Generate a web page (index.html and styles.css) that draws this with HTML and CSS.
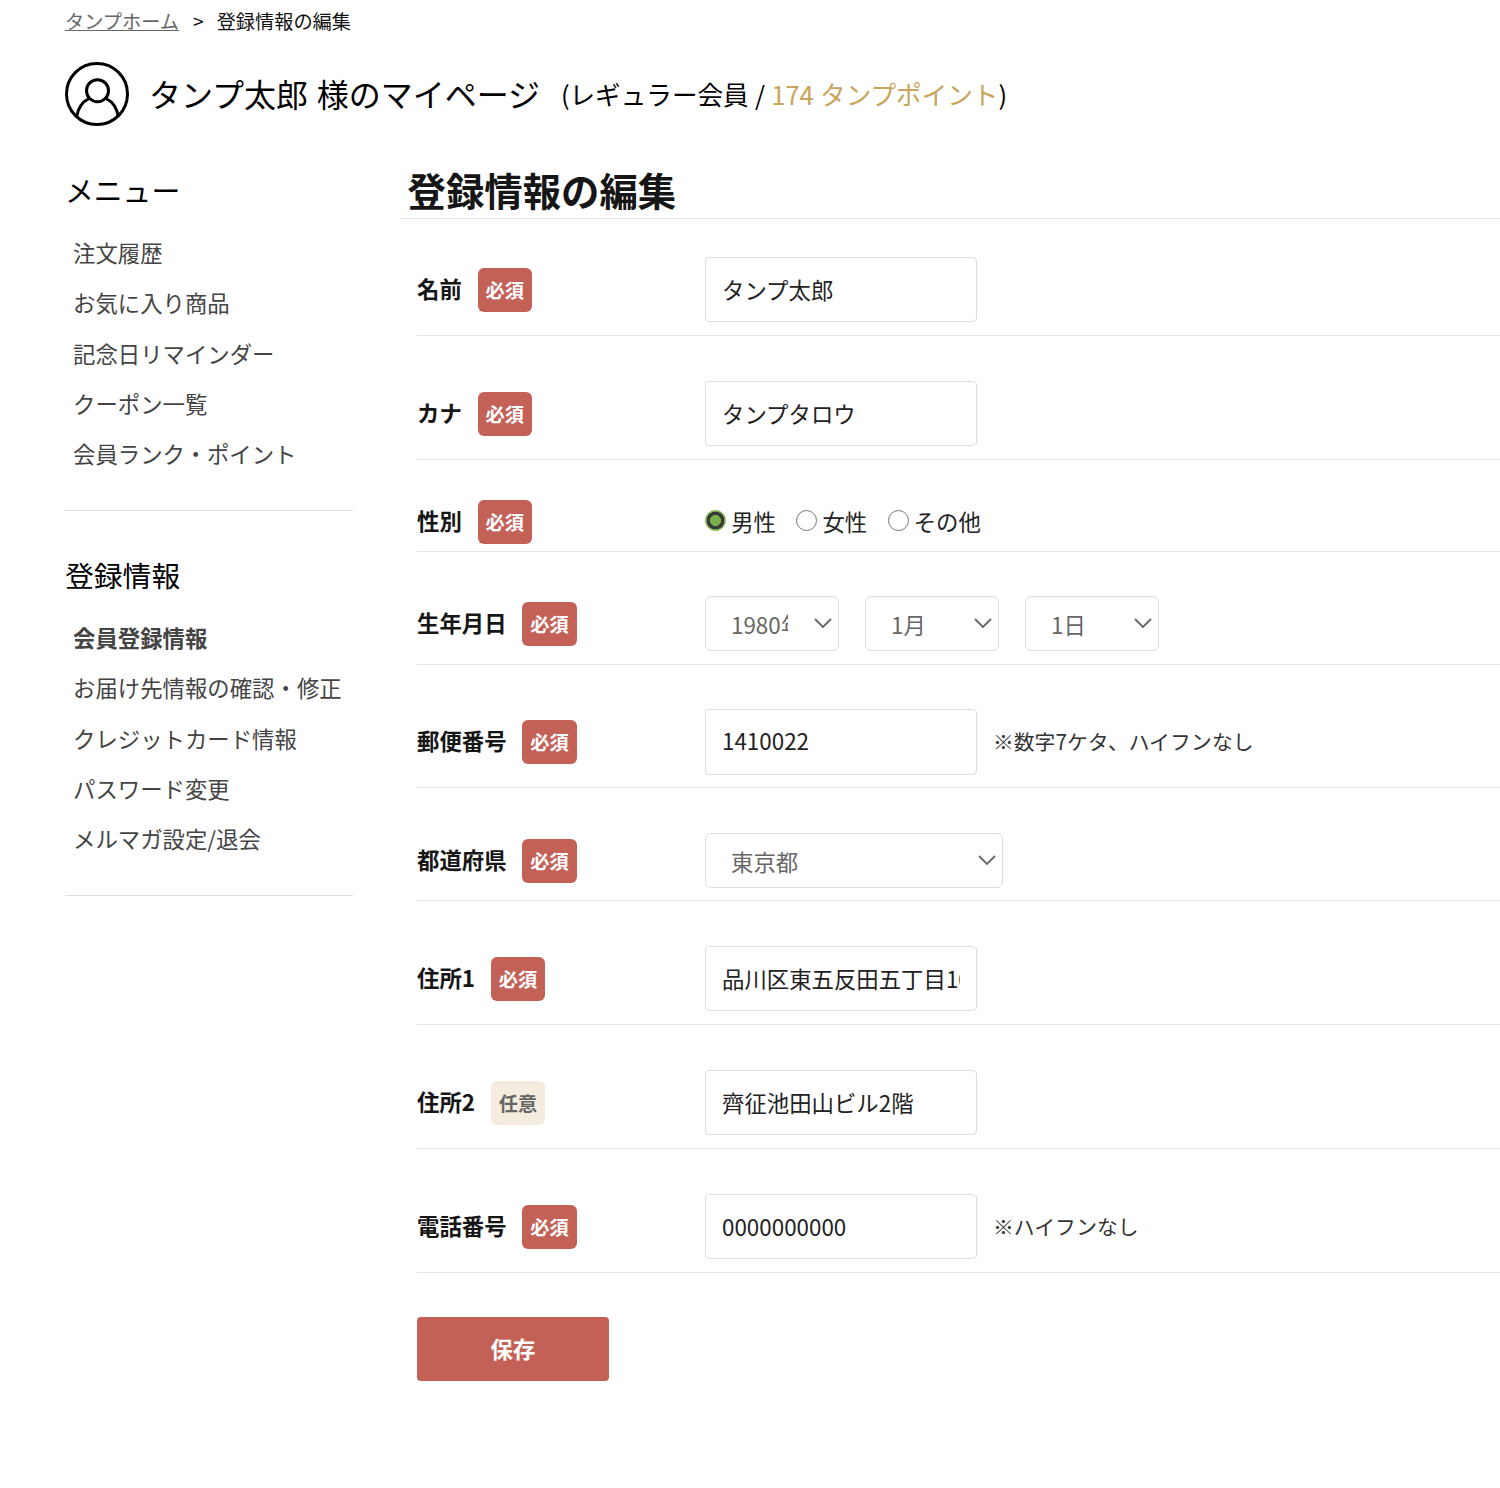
FILE: index.html
```html
<!DOCTYPE html>
<html lang="ja">
<head>
<meta charset="utf-8">
<title>登録情報の編集</title>
<link rel="stylesheet" href="styles.css">
</head>
<body>
<nav class="crumbs"><a href="#">タンプホーム</a><span class="sep">&gt;</span><span>登録情報の編集</span></nav>
<header class="user">
  <svg class="avatar" viewBox="0 0 64 64" fill="none" stroke="#000" stroke-width="3">
    <circle cx="32" cy="32" r="30.5"/>
    <circle cx="32.500" cy="28.700" r="11"/>
    <path d="M11.700 54.700C13 46 18 39.500 24 36.500M41 36.500C47 39.500 52 46 53.300 54.700"/>
  </svg>
  <span class="user-name">タンプ太郎 様のマイページ</span>
  <span class="user-rank">(レギュラー会員 / <em>174 タンプポイント</em>)</span>
</header>
<div class="page">
  <aside class="side">
    <section class="side-group">
      <h2>メニュー</h2>
      <ul>
        <li><a href="#">注文履歴</a></li>
        <li><a href="#">お気に入り商品</a></li>
        <li><a href="#">記念日リマインダー</a></li>
        <li><a href="#">クーポン一覧</a></li>
        <li><a href="#">会員ランク・ポイント</a></li>
      </ul>
    </section>
    <section class="side-group">
      <h2>登録情報</h2>
      <ul>
        <li><a href="#" class="current">会員登録情報</a></li>
        <li><a href="#">お届け先情報の確認・修正</a></li>
        <li><a href="#">クレジットカード情報</a></li>
        <li><a href="#">パスワード変更</a></li>
        <li><a href="#">メルマガ設定/退会</a></li>
      </ul>
    </section>
  </aside>
  <main class="main">
    <h1>登録情報の編集</h1>
    <form class="form">
      <div class="row row-first">
        <div class="label"><b>名前</b><span class="badge">必須</span></div>
        <input class="text" type="text" value="タンプ太郎">
      </div>
      <div class="row">
        <div class="label"><b>カナ</b><span class="badge">必須</span></div>
        <input class="text" type="text" value="タンプタロウ">
      </div>
      <div class="row row-radio">
        <div class="label"><b>性別</b><span class="badge">必須</span></div>
        <div class="radios">
          <label><input type="radio" name="sex" checked>男性</label>
          <label><input type="radio" name="sex">女性</label>
          <label><input type="radio" name="sex">その他</label>
        </div>
      </div>
      <div class="row row-date">
        <div class="label"><b>生年月日</b><span class="badge">必須</span></div>
        <div class="selects">
          <div class="select select-s"><select><option>1980年</option></select><svg viewBox="0 0 18 10"><path d="M1 1l8 8 8-8"/></svg></div>
          <div class="select select-s"><select><option>1月</option></select><svg viewBox="0 0 18 10"><path d="M1 1l8 8 8-8"/></svg></div>
          <div class="select select-s"><select><option>1日</option></select><svg viewBox="0 0 18 10"><path d="M1 1l8 8 8-8"/></svg></div>
        </div>
      </div>
      <div class="row row-zip">
        <div class="label"><b>郵便番号</b><span class="badge">必須</span></div>
        <input class="text" type="text" value="1410022">
        <span class="note">※数字7ケタ、ハイフンなし</span>
      </div>
      <div class="row row-pref">
        <div class="label"><b>都道府県</b><span class="badge">必須</span></div>
        <div class="select select-l"><select><option>東京都</option></select><svg viewBox="0 0 18 10"><path d="M1 1l8 8 8-8"/></svg></div>
      </div>
      <div class="row">
        <div class="label"><b>住所1</b><span class="badge">必須</span></div>
        <input class="text" type="text" value="品川区東五反田五丁目10番地">
      </div>
      <div class="row">
        <div class="label"><b>住所2</b><span class="badge badge-opt">任意</span></div>
        <input class="text" type="text" value="齊征池田山ビル2階">
      </div>
      <div class="row">
        <div class="label"><b>電話番号</b><span class="badge">必須</span></div>
        <input class="text" type="text" value="0000000000">
        <span class="note">※ハイフンなし</span>
      </div>
      <button class="save" type="button">保存</button>
    </form>
  </main>
</div>
</body>
</html>
```

FILE: styles.css
```css
* { box-sizing: border-box; }
html, body { margin: 0; padding: 0; }
body {
  background: #fff;
  color: #000;
  font-family: "Noto Sans CJK JP", "Noto Sans", sans-serif;
  height: 1488px;
  overflow: hidden;
}
a { color: inherit; }
.crumbs {
  display: flex;
  height: 42px;
  align-items: center;
  padding-left: 65px;
  font-size: 19.2px;
  color: #111;
}
.crumbs a { color: #666; }
.sep { margin: 0 13px 0 14px; }
.user {
  display: flex;
  align-items: center;
  height: 64px;
  margin-top: 20px;
  padding-left: 65px;
}
.avatar { width: 64px; height: 64px; flex: none; }
.user-name { margin-left: 20px; padding-bottom: 2px; font-size: 32px; word-spacing: 1.500px; }
.user-rank { margin-left: 20.800px; padding-bottom: 2px; font-size: 25.6px; word-spacing: 0.500px; }
.user-rank em { font-style: normal; color: #c9a45a; }
.page {
  display: flex;
  padding-left: 65px;
  margin-top: 38px;
}
.side { width: 288px; flex: none; }
.side-group { border-bottom: 1px solid #ddd; height: 347px; }
.side-group + .side-group { height: 385px; }
.side-group h2 {
  margin: 0;
  font-size: 28.8px;
  font-weight: 400;
  line-height: 48px;
  padding-top: 2px;
}
.side-group + .side-group h2 { padding-top: 40px; }
.side-group ul { list-style: none; margin: 13px 0 0; padding: 0 0 0 8px; }
.side-group li { font-size: 22.4px; line-height: 50.25px; color: #444; }
.side-group a { text-decoration: none; }
.side-group a.current { font-weight: 700; }
.main { flex: 1; margin-left: 47px; }
h1 {
  margin: 0;
  height: 55px;
  padding: 1px 0 0 7.500px;
  font-size: 38.4px;
  line-height: 48px;
  font-weight: 700;
  color: #161616;
  border-bottom: 1px solid #e6e6e6;
}
.form { margin-left: 17px; }
.row {
  display: flex;
  align-items: center;
  padding: 45px 0 13px;
  border-bottom: 1px solid #e6e6e6;
}
.row-first { padding-top: 38px; }
.row-radio { padding: 40px 0 7px; }
.row-date { padding: 44px 0 13px; }
.row-zip { padding: 44px 0 12px; }
.row-pref { padding: 45px 0 12px; }
.label { display: flex; align-items: center; width: 288px; flex: none; }
.label b { padding-bottom: 4px; font-size: 22.4px; font-weight: 700; color: #161616; }
.badge {
  margin-left: 15.800px;
  padding: 0 8px;
  height: 44px;
  line-height: 44px;
  border-radius: 6px;
  background: #c46157;
  color: #fff;
  font-size: 19.2px;
  font-weight: 700;
}
.badge-opt { background: #f4ecdf; color: #666; }
.text {
  width: 272px;
  height: 65px;
  padding: 0 16px 2px;
  border: 1px solid #ddd;
  border-radius: 4px;
  background: #fff;
  font: inherit;
  font-size: 22.4px;
  color: #222;
  outline: none;
}
.row-zip .text { height: 66px; padding-bottom: 4px; }
.note { margin-left: 16px; padding-bottom: 2px; font-size: 20.8px; color: #333; }
.radios { display: flex; gap: 20.300px; font-size: 22.4px; color: #222; }
.radios label { display: flex; align-items: center; padding-bottom: 2px; }
.radios input {
  appearance: none;
  width: 21px;
  height: 21px;
  margin: 0 5.200px 1px 0;
  border: 1.5px solid #767676;
  border-radius: 50%;
  background: #fff;
}
.radios input:checked {
  border: 1px solid #7ab04c;
  background: radial-gradient(circle closest-side, #7ab04c 0 56%, #3a3a3a 60% 90%, #7ab04c 95%);
}
.selects { display: flex; gap: 26px; }
.select { position: relative; height: 55px; }
.select-s { width: 134px; }
.select-l { width: 298px; }
.select select {
  appearance: none;
  width: 100%;
  height: 100%;
  padding: 0 50px 0 25px;
  border: 1px solid #ddd;
  border-radius: 6px;
  background: #fff;
  font: inherit;
  font-size: 22.4px;
  color: #666;
  outline: none;
}
.select svg {
  position: absolute;
  top: 22px;
  right: 7px;
  width: 18px;
  height: 10px;
  fill: none;
  stroke: #666;
  stroke-width: 1.8;
}
.save {
  display: block;
  width: 192px;
  height: 64px;
  margin-top: 44px;
  padding-bottom: 4px;
  border: 0;
  border-radius: 4px;
  background: #c46157;
  color: #fff;
  font: inherit;
  font-size: 22.4px;
  font-weight: 700;
}
```
